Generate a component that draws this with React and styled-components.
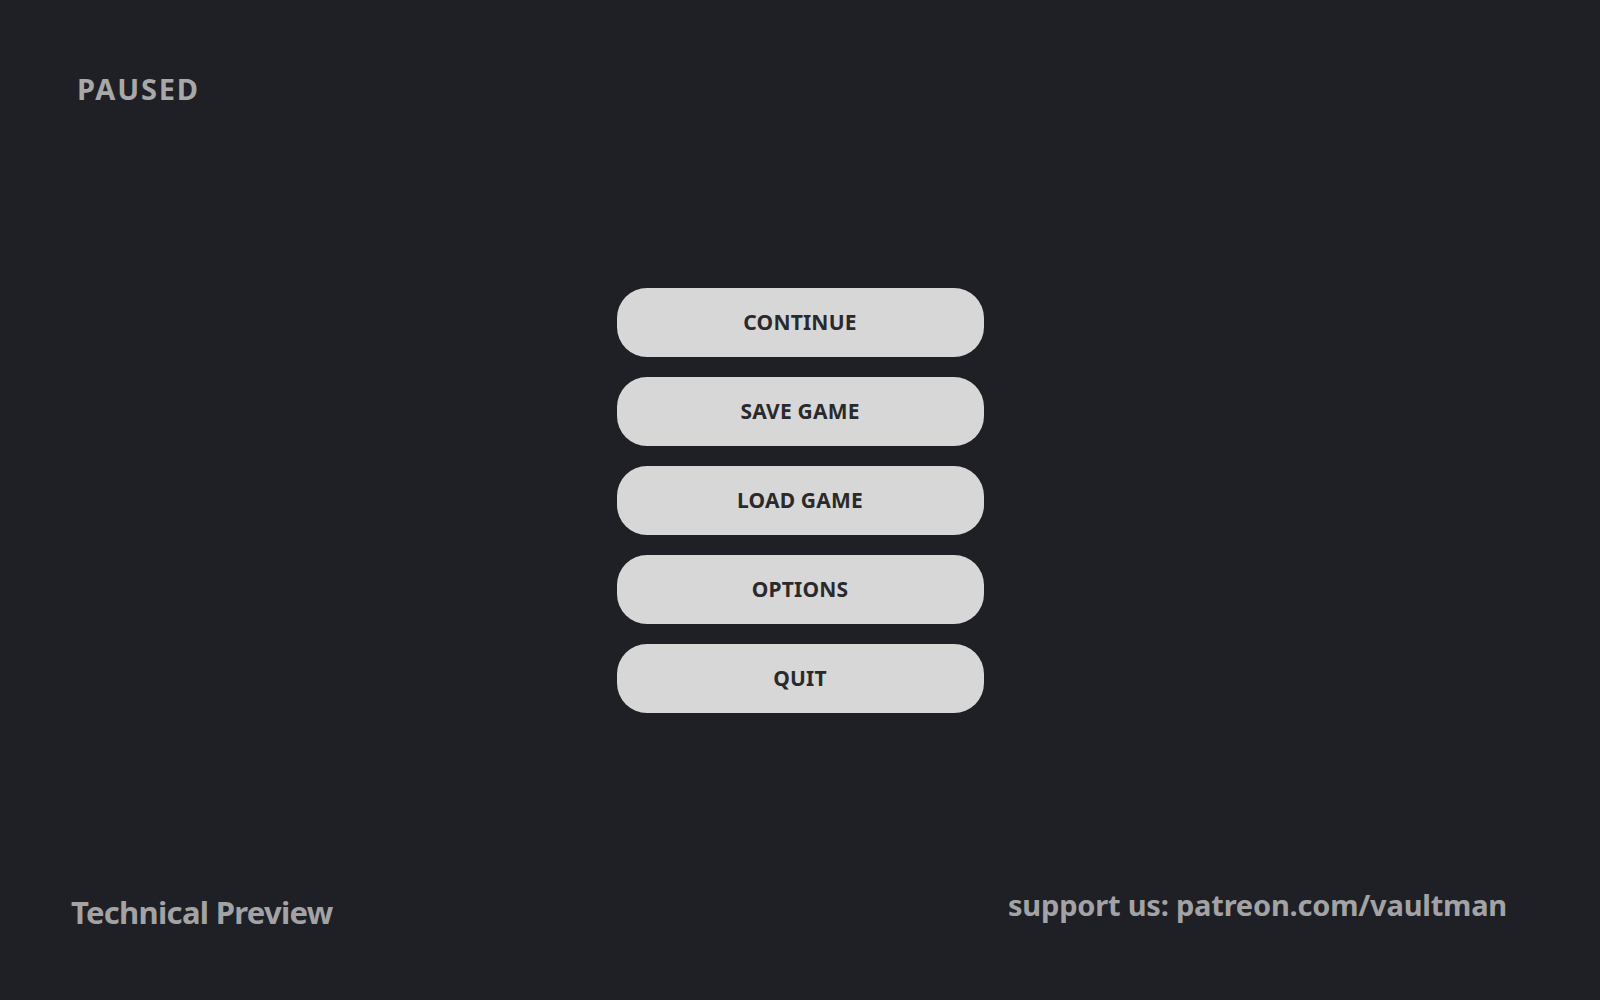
import styled, { createGlobalStyle } from "styled-components";

const GlobalStyle = createGlobalStyle`
  html, body {
    margin: 0;
    padding: 0;
    background: #1f2025;
  }
  body {
    font-family: "Noto Sans", "DejaVu Sans", sans-serif;
  }
`;

const Screen = styled.div`
  height: 100vh;
  display: grid;
  grid-template: 1fr / 1fr;
  background: #1f2025;
`;

const Title = styled.h1`
  grid-area: 1 / 1;
  align-self: start;
  justify-self: start;
  margin: 69px 0 0 77px;
  font-size: 29px;
  font-weight: 700;
  line-height: 40px;
  letter-spacing: 1.8px;
  color: #a8a8a9;
`;

const Menu = styled.nav`
  grid-area: 1 / 1;
  align-self: center;
  justify-self: center;
  display: flex;
  flex-direction: column;
  gap: 20px;
`;

const MenuButton = styled.button`
  width: 367px;
  height: 69px;
  border: none;
  border-radius: 30px;
  background: #d7d7d7;
  color: #2a2a2c;
  font-family: inherit;
  font-size: 21px;
  font-weight: 700;
  letter-spacing: 0.2px;
  cursor: pointer;
`;

const Footer = styled.footer`
  grid-area: 1 / 1;
  align-self: end;
  display: flex;
  justify-content: space-between;
  align-items: flex-end;
  padding: 0 93px 67px 71px;
`;

const FooterText = styled.span`
  font-size: ${(p) => p.size}px;
  font-weight: 700;
  letter-spacing: ${(p) => p.spacing || 0}px;
  color: #a3a3a5;
  margin-bottom: ${(p) => p.lift || 0}px;
`;

const items = ["CONTINUE", "SAVE GAME", "LOAD GAME", "OPTIONS", "QUIT"];

const App = () => {
  return (
    <>
      <GlobalStyle />
      <Screen>
        <Title>PAUSED</Title>
        <Menu>
          {items.map((label) => (
            <MenuButton key={label}>{label}</MenuButton>
          ))}
        </Menu>
        <Footer>
          <FooterText size={31} spacing={-0.7}>
            Technical Preview
          </FooterText>
          <FooterText size={29} spacing={-0.2} lift={9}>
            support us: patreon.com/vaultman
          </FooterText>
        </Footer>
      </Screen>
    </>
  );
};

export default App;
